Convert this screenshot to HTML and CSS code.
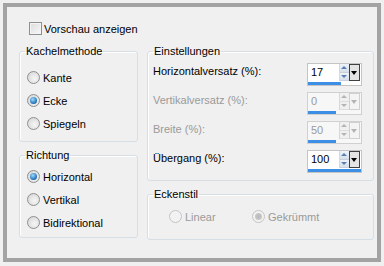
FILE: index.html
```html
<!DOCTYPE html>
<html lang="de">
<head>
    <meta charset="UTF-8">
    <title>Kacheln</title>
    <link rel="stylesheet" href="styles.css">
</head>
<body>
    <div class="frame">
        <label class="preview">
            <input type="checkbox" class="box">
            <span>Vorschau anzeigen</span>
        </label>

        <div class="columns">
            <div class="col-left">
                <fieldset class="group group-method">
                    <legend>Kachelmethode</legend>
                    <div class="group-body">
                        <label class="option"><input type="radio" name="methode"> Kante</label>
                        <label class="option"><input type="radio" name="methode" checked> Ecke</label>
                        <label class="option"><input type="radio" name="methode"> Spiegeln</label>
                    </div>
                </fieldset>

                <fieldset class="group group-direction">
                    <legend>Richtung</legend>
                    <div class="group-body">
                        <label class="option"><input type="radio" name="richtung" checked> Horizontal</label>
                        <label class="option"><input type="radio" name="richtung"> Vertikal</label>
                        <label class="option"><input type="radio" name="richtung"> Bidirektional</label>
                    </div>
                </fieldset>
            </div>

            <div class="col-right">
                <fieldset class="group group-settings">
                    <legend>Einstellungen</legend>
                    <div class="group-body">
                        <div class="row">
                            <span class="row-label">Horizontalversatz (%):</span>
                            <div class="spin">
                                <div class="spin-top">
                                    <span class="spin-value">17</span>
                                    <span class="spin-arrows"><i class="up"></i><i class="down"></i></span>
                                    <span class="spin-drop"><i></i></span>
                                </div>
                                <div class="spin-bar"><div class="spin-fill" style="width: 33px"></div></div>
                            </div>
                        </div>

                        <div class="row disabled">
                            <span class="row-label">Vertikalversatz (%):</span>
                            <div class="spin">
                                <div class="spin-top">
                                    <span class="spin-value">0</span>
                                    <span class="spin-arrows"><i class="up"></i><i class="down"></i></span>
                                    <span class="spin-drop"><i></i></span>
                                </div>
                                <div class="spin-bar"><div class="spin-fill" style="width: 28px"></div></div>
                            </div>
                        </div>

                        <div class="row disabled">
                            <span class="row-label">Breite (%):</span>
                            <div class="spin">
                                <div class="spin-top">
                                    <span class="spin-value">50</span>
                                    <span class="spin-arrows"><i class="up"></i><i class="down"></i></span>
                                    <span class="spin-drop"><i></i></span>
                                </div>
                                <div class="spin-bar"><div class="spin-fill" style="width: 28px"></div></div>
                            </div>
                        </div>

                        <div class="row">
                            <span class="row-label">Übergang (%):</span>
                            <div class="spin">
                                <div class="spin-top">
                                    <span class="spin-value">100</span>
                                    <span class="spin-arrows"><i class="up"></i><i class="down"></i></span>
                                    <span class="spin-drop"><i></i></span>
                                </div>
                                <div class="spin-bar"><div class="spin-fill" style="width: 53px"></div></div>
                            </div>
                        </div>
                    </div>
                </fieldset>

                <fieldset class="group group-corner">
                    <legend>Eckenstil</legend>
                    <div class="group-body inline-options">
                        <label class="option disabled opt-linear"><input type="radio" name="ecke" disabled> Linear</label>
                        <label class="option disabled"><input type="radio" name="ecke" checked disabled> Gekrümmt</label>
                    </div>
                </fieldset>
            </div>
        </div>
    </div>
</body>
</html>
```

FILE: styles.css
```css
body {
    margin: 0;
    background-color: #f0f0f0;
    font-family: "Liberation Sans", Arial, sans-serif;
    font-size: 11px;
    color: #000;
}

.frame {
    box-sizing: border-box;
    width: 378px;
    height: 259px;
    margin: 3px;
    border: 4px solid #a3a3a3;
    background-color: #f0f0f0;
}

.preview {
    display: flex;
    align-items: center;
    gap: 2px;
    height: 13px;
    margin: 15px 0 0 22px;
}

input[type="checkbox"].box {
    appearance: none;
    width: 13px;
    height: 13px;
    margin: 0;
    border: 1px solid #8e8f8f;
    box-sizing: border-box;
    background: linear-gradient(135deg, #dcdcdc, #f8f8f8);
    box-shadow: inset 0 0 0 1px #f4f4f4;
}

.columns {
    display: flex;
    gap: 9px;
    margin: 10px 0 0 12px;
}

.col-left {
    width: 119px;
}

.col-right {
    width: 227px;
}

.group {
    margin: 0;
    padding: 0;
    border: 1px solid #d5dfe5;
    border-radius: 3px;
    box-shadow: inset 1px 1px 0 #fff;
}

.group legend {
    margin-left: 5px;
    padding: 0 1px;
    line-height: 13px;
}

.option {
    display: flex;
    align-items: center;
    gap: 3px;
    height: 23px;
}

.group-method .group-body {
    padding: 8px 0 6px 7px;
}

.group-direction {
    margin-top: 7px;
}

.group-direction .group-body {
    padding: 3px 0 3px 7px;
}

input[type="radio"] {
    appearance: none;
    width: 13px;
    height: 13px;
    margin: 0;
    border: 1px solid #8e8f8f;
    border-radius: 50%;
    box-sizing: border-box;
    background: radial-gradient(circle at 60% 60%, #f6f6f6, #d2d2d2);
    position: relative;
}

input[type="radio"]:checked::after {
    content: "";
    position: absolute;
    left: 2px;
    top: 2px;
    width: 7px;
    height: 7px;
    border-radius: 50%;
    background: radial-gradient(circle at 40% 35%, #9fdcff, #1e6cb4 70%);
}

input[type="radio"]:disabled {
    border-color: #c4c4c4;
    background: #f2f2f2;
}

input[type="radio"]:disabled:checked::after {
    background: radial-gradient(circle, #b8b8b8, #cfcfcf);
}

.option.disabled {
    color: #9a9a9a;
}

.group-settings .group-body {
    padding: 5px 11px 1px 5px;
}

.row {
    display: flex;
    height: 29px;
}

.row-label {
    flex: 1;
    margin-top: 2px;
    line-height: 13px;
}

.row.disabled .row-label {
    color: #9a9a9a;
}

.spin {
    box-sizing: border-box;
    width: 55px;
    height: 23px;
    border: 1px solid #c4c4c4;
    background-color: #fff;
}

.spin-top {
    display: flex;
    height: 17px;
}

.spin-value {
    width: 28px;
    padding-left: 3px;
    line-height: 17px;
}

.spin-arrows {
    display: flex;
    flex-direction: column;
    width: 9px;
    border-left: 1px solid #d8d8d8;
}

.spin-arrows i {
    flex: 1;
    position: relative;
    background: linear-gradient(#eef3f9, #d5e0ec);
    border-bottom: 1px solid #c8d0da;
}

.spin-arrows i::after {
    content: "";
    position: absolute;
    left: 1px;
    border-left: 3px solid transparent;
    border-right: 3px solid transparent;
}

.spin-arrows .up::after {
    top: 2px;
    border-bottom: 3px solid #5a7fb0;
}

.spin-arrows .down::after {
    top: 2px;
    border-top: 3px solid #5a7fb0;
}

.spin-drop {
    position: relative;
    box-sizing: border-box;
    width: 11px;
    border: 1px solid #404040;
    background-color: #e4e4e4;
}

.spin-drop i {
    position: absolute;
    left: 1px;
    top: 6px;
    border-left: 3.5px solid transparent;
    border-right: 3.5px solid transparent;
    border-top: 4px solid #000;
}

.spin-bar {
    height: 3px;
    margin-top: 1px;
}

.spin-fill {
    height: 3px;
    background-color: #3d8fe6;
}

.row.disabled .spin {
    border-color: #d0d0d0;
    background-color: #f7f7f7;
}

.row.disabled .spin-value {
    color: #9a9a9a;
}

.row.disabled .spin-arrows i {
    background: #f0f0f0;
    border-bottom-color: #dedede;
}

.row.disabled .spin-arrows .up::after {
    border-bottom-color: #b4b4b4;
}

.row.disabled .spin-arrows .down::after {
    border-top-color: #b4b4b4;
}

.row.disabled .spin-drop {
    border-color: #d0d0d0;
    background-color: #f4f4f4;
}

.row.disabled .spin-drop i {
    border-top-color: #b4b4b4;
}

.group-corner {
    margin-top: 7px;
}

.group-corner .group-body {
    padding: 4px 0 11px 21px;
}

.inline-options {
    display: flex;
}

.opt-linear {
    width: 83px;
}
```
